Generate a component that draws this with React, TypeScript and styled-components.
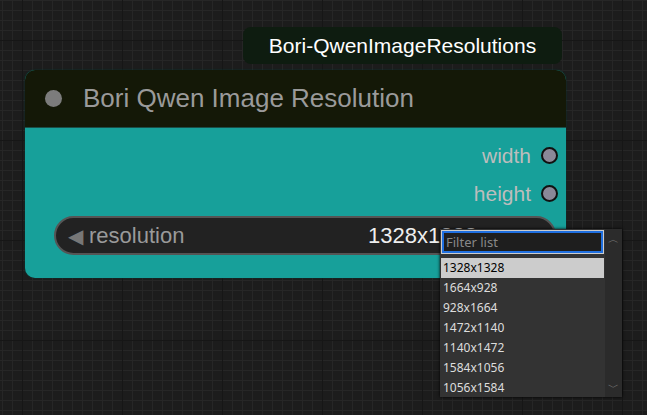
import styled, { createGlobalStyle } from 'styled-components';

const Global = createGlobalStyle`
  html, body { margin: 0; padding: 0; }
  body {
    width: 647px;
    height: 415px;
    overflow: hidden;
    background-color: #1c1c1c;
    background-image:
      linear-gradient(#161616 1px, transparent 1px),
      linear-gradient(90deg, #161616 1px, transparent 1px),
      linear-gradient(#262626 1px, transparent 1px),
      linear-gradient(90deg, #262626 1px, transparent 1px);
    background-size: 100px 100px, 100px 100px, 10px 10px, 10px 10px;
    background-position: 22px 40px, 22px 40px, 2px 0, 2px 0;
    font-family: 'Liberation Sans', Arial, sans-serif;
  }
`;

const Canvas = styled.div`
  position: relative;
  width: 647px;
  height: 415px;
`;

const Badge = styled.div`
  position: absolute;
  left: 243px;
  top: 27px;
  width: 319px;
  height: 37px;
  box-sizing: border-box;
  background: #0e1c10;
  border-radius: 8px;
  color: #fff;
  font-size: 21px;
  display: flex;
  align-items: center;
  justify-content: center;
`;

const Node = styled.div`
  position: absolute;
  left: 25px;
  top: 70px;
  width: 541px;
  height: 208px;
  border-radius: 10px;
  overflow: hidden;
  background: #17a09a;
  box-shadow: 0 0 2px #0b3a36;
  display: flex;
  flex-direction: column;
`;

const Header = styled.div`
  height: 57px;
  background: #141807;
  border-bottom: 1px solid #1a4e48;
  display: flex;
  align-items: center;
  gap: 21px;
  padding-left: 20px;
  color: #9a9a9a;
  font-size: 26px;
`;

const Dot = styled.span`
  width: 17px;
  height: 17px;
  border-radius: 50%;
  background: #7c7c7c;
`;

const Outputs = styled.div`
  display: flex;
  flex-direction: column;
  align-items: flex-end;
  gap: 15px;
  padding: 16px 8px 0 0;
`;

const Output = styled.div`
  display: flex;
  align-items: center;
  gap: 10px;
  color: #bdbdbd;
  font-size: 21px;
  height: 23px;
`;

const Socket = styled.span`
  width: 13px;
  height: 13px;
  border-radius: 50%;
  background: #8a8898;
  border: 2px solid #111;
`;

const Widget = styled.div`
  margin: 11px 10px 0 29px;
  height: 39px;
  box-sizing: border-box;
  border-radius: 20px;
  background: #222;
  border: 2px solid #555;
  display: flex;
  align-items: center;
  padding: 0 16px 0 12px;
  font-size: 22px;
  color: #9a9a9a;
`;

const Arrow = styled.span`
  color: #777;
  font-size: 20px;
  margin-right: 6px;
`;

const Value = styled.span`
  margin-left: auto;
  color: #eee;
  margin-right: 40px;
`;

const Menu = styled.div`
  position: absolute;
  left: 440px;
  top: 229px;
  width: 182px;
  height: 168px;
  background: #333;
  display: flex;
  font-family: 'Noto Sans', 'DejaVu Sans', sans-serif;
  box-shadow: 0 0 3px #000;
`;

const MenuMain = styled.div`
  flex: 1;
  min-width: 0;
  display: flex;
  flex-direction: column;
  padding: 2px 1px 0 1px;
`;

const Filter = styled.input`
  height: 22px;
  width: auto;
  min-width: 0;
  margin: 0 1px 5px 1px;
  box-sizing: border-box;
  background: #1e1e1e;
  border: 2px solid #1f6fe0;
  outline: 1px solid #ccc;
  color: #ddd;
  font: 13px 'Noto Sans', sans-serif;
  padding: 0 2px;
  &::placeholder { color: #888; }
`;

const Item = styled.div<{ $active?: boolean }>`
  height: 20px;
  line-height: 20px;
  font-size: 12px;
  padding-left: 2px;
  background: ${(p) => (p.$active ? '#ccc' : 'transparent')};
  color: ${(p) => (p.$active ? '#000' : '#ddd')};
`;

const Scroll = styled.div`
  width: 17px;
  flex-shrink: 0;
  background: #2b2b2b;
  display: flex;
  flex-direction: column;
  justify-content: space-between;
  align-items: center;
  color: #777;
  font-size: 11px;
  padding: 2px 0;
`;

const items = ['1328x1328', '1664x928', '928x1664', '1472x1140', '1140x1472', '1584x1056', '1056x1584'];

export default function App() {
  return (
    <Canvas>
      <Global />
      <Badge>Bori-QwenImageResolutions</Badge>
      <Node>
        <Header>
          <Dot />
          Bori Qwen Image Resolution
        </Header>
        <Outputs>
          <Output>width<Socket /></Output>
          <Output>height<Socket /></Output>
        </Outputs>
        <Widget>
          <Arrow>◀</Arrow>resolution
          <Value>1328x1328</Value>
          <Arrow>▶</Arrow>
        </Widget>
      </Node>
      <Menu>
        <MenuMain>
          <Filter placeholder="Filter list" />
          {items.map((it, i) => (
            <Item key={it} $active={i === 0}>{it}</Item>
          ))}
        </MenuMain>
        <Scroll>
          <span>︿</span>
          <span>﹀</span>
        </Scroll>
      </Menu>
    </Canvas>
  );
}
